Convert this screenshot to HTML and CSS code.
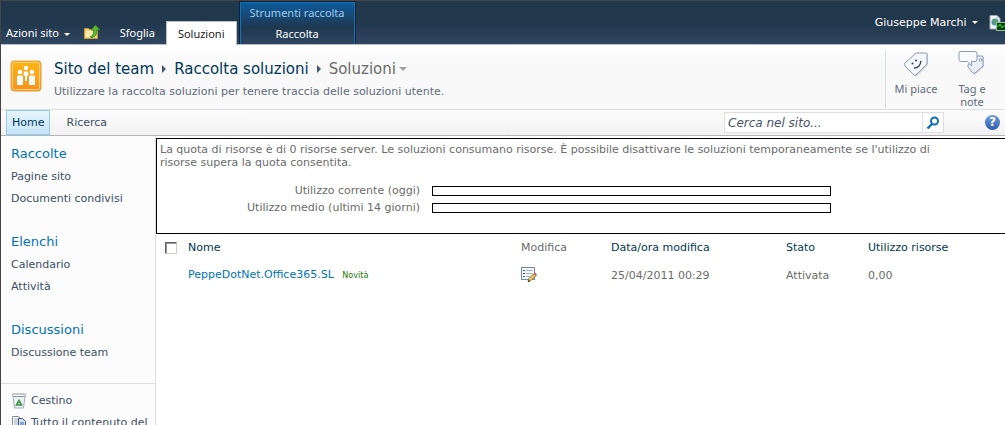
FILE: index.html
```
<!DOCTYPE html>
<html lang="it">
<head>
  <meta charset="UTF-8">
  <meta name="viewport" content="width=device-width, initial-scale=1.0">
  <title>Raccolta soluzioni - Soluzioni</title>
  <link rel="stylesheet" href="styles.css">
</head>
<body>
  <!-- Ribbon -->
  <header class="ribbon">
    <button type="button" class="site-actions">Azioni sito <span class="arrow-down"></span></button>
    <a href="#" class="navigate-up" aria-label="Naviga verso l'alto">
      <svg width="16" height="16" viewBox="0 0 16 16">
        <path d="M.5 4.500h4l1 1h8v9H.5z" fill="#f3d27a" stroke="#c89b3c"/>
        <path d="M2 7h10v6H2z" fill="#fbeab0"/>
        <path d="M6 12.500c3 0 3.500-3 3.500-6.500H7l4.500-5L16 6h-3c0 5-2 7.500-6 7.500z" fill="#5cb531" stroke="#2f7d1b" stroke-width=".7"/>
      </svg>
    </a>
    <nav class="tabs">
      <a href="#" class="tab">Sfoglia</a>
      <a href="#" class="tab active">Soluzioni</a>
    </nav>
    <div class="tab-group">
      <span class="tab-group-title">Strumenti raccolta</span>
      <a href="#" class="tab-group-link">Raccolta</a>
    </div>
    <div class="user">
      <button type="button" class="user-menu">Giuseppe Marchi <span class="arrow-down"></span></button>
      <svg class="status-icon" width="16" height="16" viewBox="0 0 16 16">
        <path d="M1 .5h7l3 3V14H1z" fill="#f2f6f8" stroke="#9aaab5"/>
        <path d="M8 .5v3h3z" fill="#b9c8d2"/>
        <circle cx="6" cy="7" r="3.500" fill="#4f93a8"/>
        <path d="M4 6l3-2 1 3-2 2z" fill="#5fa35a"/>
        <path d="M7.500 7.500h9v8h-9z" fill="#063d06" stroke="#9ac59a"/>
        <path d="M8 11h2l1-2 2 4 1-2h3" fill="none" stroke="#2fd32f"/>
      </svg>
    </div>
  </header>

  <!-- Title area -->
  <div class="title-area">
    <svg class="site-logo" width="32" height="32" viewBox="0 0 32 32">
      <defs>
        <linearGradient id="logo-fill" x1="0" y1="0" x2="0" y2="1">
          <stop offset="0" stop-color="#fdb714"/>
          <stop offset="1" stop-color="#f7901e"/>
        </linearGradient>
      </defs>
      <rect x="1" y="1" width="30" height="30" rx="3" fill="url(#logo-fill)" stroke="#e9a04a"/>
      <rect x="2.500" y="2.500" width="27" height="27" rx="2" fill="none" stroke="#ffcf6a"/>
      <g fill="#fff">
        <circle cx="16" cy="8" r="2.200"/>
        <circle cx="10" cy="12" r="2.300"/>
        <circle cx="22" cy="12" r="2.300"/>
        <path d="M8 15.500h4q1 0 1 1V25H7v-8.500q0-1 1-1zM20 15.500h4q1 0 1 1V25h-6v-8.500q0-1 1-1z"/>
        <path d="M14 11.500h4l.5 3.500-1.500 1v5h-2v-5l-1.500-1z"/>
      </g>
    </svg>
    <div class="title-text">
      <h1 class="breadcrumb">
        <a href="#">Sito del team</a>
        <span class="arrow-right"></span>
        <a href="#">Raccolta soluzioni</a>
        <span class="arrow-right"></span>
        <span class="current">Soluzioni</span>
        <span class="arrow-down"></span>
      </h1>
      <p class="description">Utilizzare la raccolta soluzioni per tenere traccia delle soluzioni utente.</p>
    </div>
    <div class="social">
      <a href="#" class="social-link">
        <svg width="32" height="32" viewBox="0 0 32 32">
          <path d="M5 13L15 4q1-1 2-1h9q1 0 1 1v9q0 1-1 2L16 25q-1 1-2 0l-9-9q-1-2 0-3z" fill="#d2d4d8" transform="translate(1 1)"/>
          <path d="M5 13L15 4q1-1 2-1h9q1 0 1 1v9q0 1-1 2L16 25q-1 1-2 0l-9-9q-1-2 0-3z" fill="#f5f8fc" stroke="#8c9bb4"/>
          <path d="M14 18q6 0 7-7" fill="none" stroke="#34435c" stroke-width="1.400"/>
          <circle cx="12.500" cy="13.500" r="1" fill="#34435c"/>
          <circle cx="16" cy="10.500" r="1" fill="#34435c"/>
        </svg>
        Mi piace
      </a>
      <a href="#" class="social-link">
        <svg width="32" height="32" viewBox="0 0 32 32">
          <path d="M12 15l7-9h7q1 0 1 1v9l-8 7q-1 1-2 0l-5-6z" fill="#d2d4d8" transform="translate(1 1)"/>
          <path d="M12 15l7-9h7q1 0 1 1v9l-8 7q-1 1-2 0l-5-6z" fill="#e9eff7" stroke="#8c9bb4"/>
          <circle cx="24.500" cy="10" r="1.200" fill="#fff" stroke="#8c9bb4"/>
          <path d="M4 1.500h15q2 0 2 2v6q0 2-2 2h-3.500v4.500l-4-4.500H5q-2 0-2-2V3.500q0-2 1-2z" fill="#f8fafd" stroke="#8c9bb4"/>
        </svg>
        Tag e note
      </a>
    </div>
  </div>

  <!-- Top navigation -->
  <div class="top-nav">
    <nav class="top-links">
      <a href="#" class="top-link selected">Home</a>
      <a href="#" class="top-link">Ricerca</a>
    </nav>
    <form class="search">
      <input type="text" placeholder="Cerca nel sito..." aria-label="Cerca nel sito">
      <button type="button" aria-label="Cerca">
        <svg width="14" height="14" viewBox="0 0 14 14">
          <circle cx="8.500" cy="5" r="3.500" fill="#fff" stroke="#0f6fb5" stroke-width="2"/>
          <path d="M6 8l-4.500 4.500" stroke="#0f6fb5" stroke-width="2.400"/>
        </svg>
      </button>
    </form>
    <a href="#" class="help" aria-label="Guida">?</a>
  </div>

  <div class="main">
    <!-- Quick launch -->
    <aside class="quick-launch">
      <section>
        <h2><a href="#">Raccolte</a></h2>
        <ul>
          <li><a href="#">Pagine sito</a></li>
          <li><a href="#">Documenti condivisi</a></li>
        </ul>
      </section>
      <section>
        <h2><a href="#">Elenchi</a></h2>
        <ul>
          <li><a href="#">Calendario</a></li>
          <li><a href="#">Attività</a></li>
        </ul>
      </section>
      <section>
        <h2><a href="#">Discussioni</a></h2>
        <ul>
          <li><a href="#">Discussione team</a></li>
        </ul>
      </section>
      <ul class="special">
        <li>
          <a href="#">
            <svg width="16" height="16" viewBox="0 0 16 16">
              <path d="M2 3l1.500 12h9L14 3z" fill="#eef2f6" stroke="#a3aebc"/>
              <rect x="1.500" y="1" width="13" height="2.500" rx="1" fill="#fff" stroke="#8793a5"/>
              <path d="M8 7.500l2.500 4.500h-5z" fill="none" stroke="#3f9142" stroke-width="1.600"/>
            </svg>
            Cestino
          </a>
        </li>
        <li>
          <a href="#">
            <svg width="16" height="16" viewBox="0 0 16 16">
              <path d="M1.500 1.500h6l3 3v9h-9z" fill="#fff" stroke="#7c8ba3"/>
              <path d="M3 4h4M3 6h4M3 8h4M3 10h4" stroke="#9aa9c0"/>
              <path d="M7.500 3.500h4l3 3v9h-7z" fill="#d6e4f5" stroke="#3c5580"/>
              <path d="M9 8h4M9 10h4M9 12h4" stroke="#2f69b0"/>
            </svg>
            Tutto il contenuto del
          </a>
        </li>
      </ul>
    </aside>

    <main class="content">
      <div class="quota">
        <p>La quota di risorse è di 0 risorse server. Le soluzioni consumano risorse. È possibile disattivare le soluzioni temporaneamente se l'utilizzo di risorse supera la quota consentita.</p>
        <div class="usage">
          <span>Utilizzo corrente (oggi)</span>
          <div class="bar"></div>
          <span>Utilizzo medio (ultimi 14 giorni)</span>
          <div class="bar"></div>
        </div>
      </div>

      <table class="solutions">
        <thead>
          <tr>
            <th class="col-check"><input type="checkbox" aria-label="Seleziona tutto"></th>
            <th class="col-name"><a href="#">Nome</a></th>
            <th class="col-edit">Modifica</th>
            <th class="col-date"><a href="#">Data/ora modifica</a></th>
            <th class="col-status"><a href="#">Stato</a></th>
            <th><a href="#">Utilizzo risorse</a></th>
          </tr>
        </thead>
        <tbody>
          <tr>
            <td></td>
            <td><a href="#">PeppeDotNet.Office365.SL</a> <span class="new">Novità</span></td>
            <td>
              <a href="#" aria-label="Modifica">
                <svg width="16" height="16" viewBox="0 0 16 16">
                  <rect x=".5" y=".5" width="13" height="12" fill="#f4f8fd" stroke="#7088ae"/>
                  <path d="M2 3.500h2M2 6.500h2M2 9.500h2" stroke="#36588f"/>
                  <path d="M5 3.500h7M5 6.500h6M5 9.500h4" stroke="#9fb0cb"/>
                  <path d="M7 14.500l1-3 5-5 2 2-5 5z" fill="#f5cf55" stroke="#6f5a2a" stroke-width=".8"/>
                  <path d="M12.500 7l1.500-1.500 2 2L14.500 9z" fill="#d65a4a"/>
                  <path d="M7 15l.5-2L9 14.500z" fill="#222"/>
                </svg>
              </a>
            </td>
            <td>25/04/2011 00:29</td>
            <td>Attivata</td>
            <td>0,00</td>
          </tr>
        </tbody>
      </table>
    </main>
  </div>
</body>
</html>
```
FILE: styles.css
```
* {
  box-sizing: border-box;
}
body {
  display: flex;
  flex-direction: column;
  height: 100vh;
  margin: 0;
  overflow: hidden;
  border-top: 1px solid #444;
  border-left: 1px solid #444;
  background: #fff;
  color: #6b6b6b;
  font-family: Verdana, "DejaVu Sans", sans-serif;
  font-size: 11px;
  line-height: 13px;
}
a {
  color: inherit;
  text-decoration: none;
}
button {
  padding: 0;
  border: none;
  background: none;
  color: inherit;
  font: inherit;
  cursor: pointer;
}
svg {
  display: block;
  flex: none;
}
h1, h2, p, ul {
  margin: 0;
  padding: 0;
  font-weight: normal;
  list-style: none;
}
.arrow-down {
  display: inline-block;
  border: 3px solid transparent;
  border-top-color: currentColor;
  border-bottom: none;
  vertical-align: middle;
}
.arrow-right {
  border: 4px solid transparent;
  border-left-color: #44546a;
  border-right: none;
}

/* Ribbon */
.ribbon {
  display: flex;
  flex: none;
  height: 44px;
  border-bottom: 1px solid #b6bdc6;
  background: linear-gradient(#21374c 50%, #314660);
  color: #fff;
  font-family: "Segoe UI", "Noto Sans", sans-serif;
  font-size: 11px;
  line-height: 16px;
}
.site-actions {
  align-self: flex-end;
  margin: 0 14px 3px 5px;
}
.site-actions .arrow-down,
.user-menu .arrow-down {
  margin-left: 2px;
}
.navigate-up {
  align-self: flex-end;
  margin-bottom: 4px;
}
.tabs {
  display: flex;
  align-self: flex-end;
  margin: 0 2px -1px 9px;
}
.tab {
  padding: 4px 11px 3px;
}
.tab.active {
  border: 1px solid #b6bdc6;
  border-bottom: none;
  background: #fff;
  color: #222;
}
.tab-group {
  display: flex;
  flex-direction: column;
  justify-content: space-between;
  padding: 3px 10px 2px;
  border: 1px solid #0e2236;
  border-bottom: none;
  background: linear-gradient(#0d5c9c, #1f3850 60%, #2d4560);
  box-shadow: inset 1px 1px #1272b5, inset -1px 0 #1272b5;
  text-align: center;
}
.tab-group-title {
  color: #9ccbee;
}
.user {
  display: flex;
  align-items: center;
  gap: 11px;
  margin-left: auto;
  font-family: Verdana, "DejaVu Sans", sans-serif;
}

/* Title area */
.title-area {
  display: flex;
  flex: none;
  min-height: 65px;
  border-bottom: 1px solid #dcdee0;
  background: linear-gradient(#fff, #f9f9f9 20px);
}
.site-logo {
  margin: 15px 12px 0 9px;
}
.title-text {
  padding-top: 14px;
}
.breadcrumb {
  display: flex;
  align-items: center;
  gap: 8px;
  color: #003759;
  font-size: 15px;
  line-height: 20px;
}
.breadcrumb .current {
  color: #6b6b6b;
}
.breadcrumb .arrow-down {
  margin-left: -5px;
  border-width: 4px;
  border-bottom: none;
  border-top-color: #a0a0a0;
}
.description {
  margin-top: 6px;
  color: #5f6b7c;
}
.social {
  display: flex;
  gap: 4px;
  margin: 5px 7px 1px auto;
  padding-left: 4px;
  border-left: 1px solid #dcdee0;
  color: #5f6b7c;
  font-family: "Segoe UI", "Noto Sans", sans-serif;
}
.social-link {
  display: flex;
  flex-direction: column;
  align-items: center;
  width: 52px;
  text-align: center;
}

/* Top navigation */
.top-nav {
  display: flex;
  flex: none;
  align-items: center;
  height: 26px;
  padding: 0 5px;
  border-bottom: 1px solid #b5b5b8;
  background: linear-gradient(#fdfdfd, #f2f2f3);
  color: #3b4f65;
}
.top-links {
  display: flex;
  align-self: stretch;
  gap: 10px;
}
.top-link {
  padding: 6px;
}
.top-link.selected {
  padding: 5px;
  border: 1px solid #91cdf2;
  background: linear-gradient(#e6f5ff, #c6e5f8);
  color: #003759;
}
.search {
  display: flex;
  width: 220px;
  height: 21px;
  margin-left: auto;
  border: 1px solid #dcdee0;
  background: #fff;
}
.search input {
  flex: 1;
  min-width: 0;
  padding: 0 3px;
  border: none;
  background: none;
  font: italic 12px Verdana, "DejaVu Sans", sans-serif;
}
.search input::placeholder {
  color: #44546a;
}
.search button {
  display: flex;
  align-items: center;
  justify-content: center;
  width: 21px;
  border-left: 1px solid #dcdee0;
}
.help {
  width: 15px;
  height: 15px;
  margin-left: 41px;
  border-radius: 50%;
  background: linear-gradient(#6d9be0, #2f5cb0);
  color: #fff;
  font-size: 12px;
  font-weight: bold;
  line-height: 15px;
  text-align: center;
}

/* Quick launch */
.main {
  display: flex;
  flex: 1;
  min-height: 0;
}
.quick-launch {
  flex: none;
  width: 155px;
  border-right: 1px solid #dbddde;
  background: #fcfcfc;
  color: #3b4f65;
}
.quick-launch section {
  padding: 9px 0 17px 10px;
}
.quick-launch h2 {
  color: #0072bc;
  font-size: 13px;
  line-height: 18px;
}
.quick-launch li {
  padding-top: 6px;
  line-height: 16px;
}
.special {
  margin-top: 5px;
  padding: 3px 0 0 10px;
  border-top: 1px solid #dbddde;
}
.special a {
  display: flex;
  gap: 4px;
  white-space: nowrap;
}

/* Content */
.content {
  flex: 1;
  padding-top: 2px;
}
.quota {
  height: 96px;
  padding: 4px 3px;
  border: 1px solid #000;
  border-right: none;
}
.quota p {
  padding-right: 40px;
}
.usage {
  display: grid;
  grid-template-columns: 260px 399px;
  column-gap: 12px;
  row-gap: 4px;
  align-items: center;
  margin-top: 15px;
  text-align: right;
}
.bar {
  height: 10px;
  border: 1px solid #000;
}
.solutions {
  width: 100%;
  border-collapse: collapse;
  table-layout: fixed;
}
.solutions th,
.solutions td {
  padding: 0;
  font-weight: normal;
  text-align: left;
}
.solutions th {
  height: 27px;
}
.solutions td {
  height: 28px;
}
.solutions th a {
  color: #003759;
}
.solutions td a {
  color: #0072bc;
}
.col-check {
  width: 32px;
}
.col-name {
  width: 333px;
}
.col-edit {
  width: 90px;
}
.col-date {
  width: 175px;
}
.col-status {
  width: 82px;
}
.solutions input {
  display: block;
  width: 12px;
  height: 12px;
  margin: 0 0 0 9px;
  border: 1px solid;
  border-color: #606060 #d0cdc6 #d0cdc6 #606060;
  background: #fff;
  box-shadow: inset 1px 1px #9a9a9a;
  appearance: none;
}
.new {
  margin-left: 5px;
  color: #1b7a00;
  font-family: Tahoma, "DejaVu Sans Condensed", sans-serif;
  font-size: 9px;
}
```
